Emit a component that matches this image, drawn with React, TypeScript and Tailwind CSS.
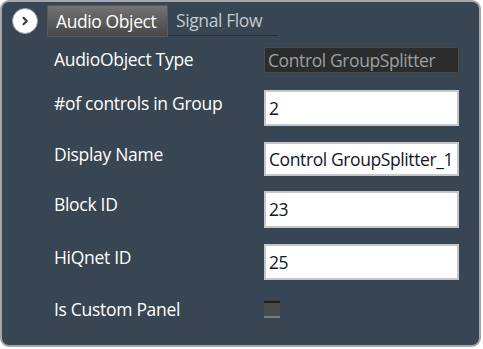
import React from "react";

const font = { fontFamily: '"Open Sans", "Noto Sans", sans-serif' };

function Label({ children, up = false }: { children: React.ReactNode; up?: boolean }) {
  return (
    <div className={`text-[17.5px] text-white leading-none tracking-[-0.3px] ${up ? "mb-[9px]" : ""}`}>
      {children}
    </div>
  );
}

function TextBox({ value, h }: { value: string; h: string }) {
  return (
    <div className={`w-[195px] ${h} bg-white border-2 border-[#c4c8cc] flex items-center pl-[3px] text-[17.5px] text-[#101828] overflow-hidden whitespace-nowrap tracking-[-0.4px]`}>
      {value}
    </div>
  );
}

export default function App() {
  return (
    <div className="w-[483px] h-[349px] bg-white" style={font}>
      <div className="w-[481px] h-[347px] rounded-[9px] border-2 border-[#a3a6aa] bg-[#384552] relative overflow-hidden">
        <div className="flex items-start pt-[3px]">
          <div className="w-[45px] flex justify-center pt-[3px]">
            <div className="w-[26px] h-[26px] rounded-full bg-white border border-[#9aa0a6] flex items-center justify-center">
              <svg width="10" height="10" viewBox="0 0 10 10">
                <path d="M3.5 1.8 L6.8 5 L3.5 8.2" stroke="#3a3f45" strokeWidth="2.2" fill="none" strokeLinecap="round" strokeLinejoin="round" />
              </svg>
            </div>
          </div>
          <div className="h-[32px] w-[121px] bg-gradient-to-b from-[#737373] to-[#474747] border border-[#5a5a5a] rounded-t-[2px] flex items-center pl-[8px] text-[17.5px] text-white tracking-[-0.4px]">
            Audio Object
          </div>
          <div className="h-[31px] w-[110px] border-b border-[#2a2f35] flex items-center pl-[8px] text-[17.5px] text-[#c2c9d0] tracking-[-0.4px]">
            Signal Flow
          </div>
        </div>
        <div className="grid grid-cols-[210px_195px] pl-[52px] mt-[10px] items-center">
          <Label>AudioObject Type</Label>
          <div className="w-[195px] h-[26px] bg-[#2c2c2c] border border-[#4a4a4a] rounded-[2px] flex items-center pl-[3px] text-[17.5px] text-[#9aa0a6] tracking-[-0.4px] whitespace-nowrap overflow-hidden">
            Control GroupSplitter
          </div>
          <div className="h-[17px] col-span-2" />
          <Label up>#of controls in Group</Label>
          <TextBox value="2" h="h-[36px]" />
          <div className="h-[16px] col-span-2" />
          <Label up>Display Name</Label>
          <TextBox value="Control GroupSplitter_1" h="h-[34px]" />
          <div className="h-[15px] col-span-2" />
          <Label up>Block ID</Label>
          <TextBox value="23" h="h-[37px]" />
          <div className="h-[16px] col-span-2" />
          <Label up>HiQnet ID</Label>
          <TextBox value="25" h="h-[36px]" />
          <div className="h-[21px] col-span-2" />
          <Label>Is Custom Panel</Label>
          <div className="w-[16px] h-[17px] bg-[#4a4a4a] border-t-2 border-t-[#1e1e1e] border-b-2 border-b-[#7a7a7a]" />
        </div>
      </div>
    </div>
  );
}
